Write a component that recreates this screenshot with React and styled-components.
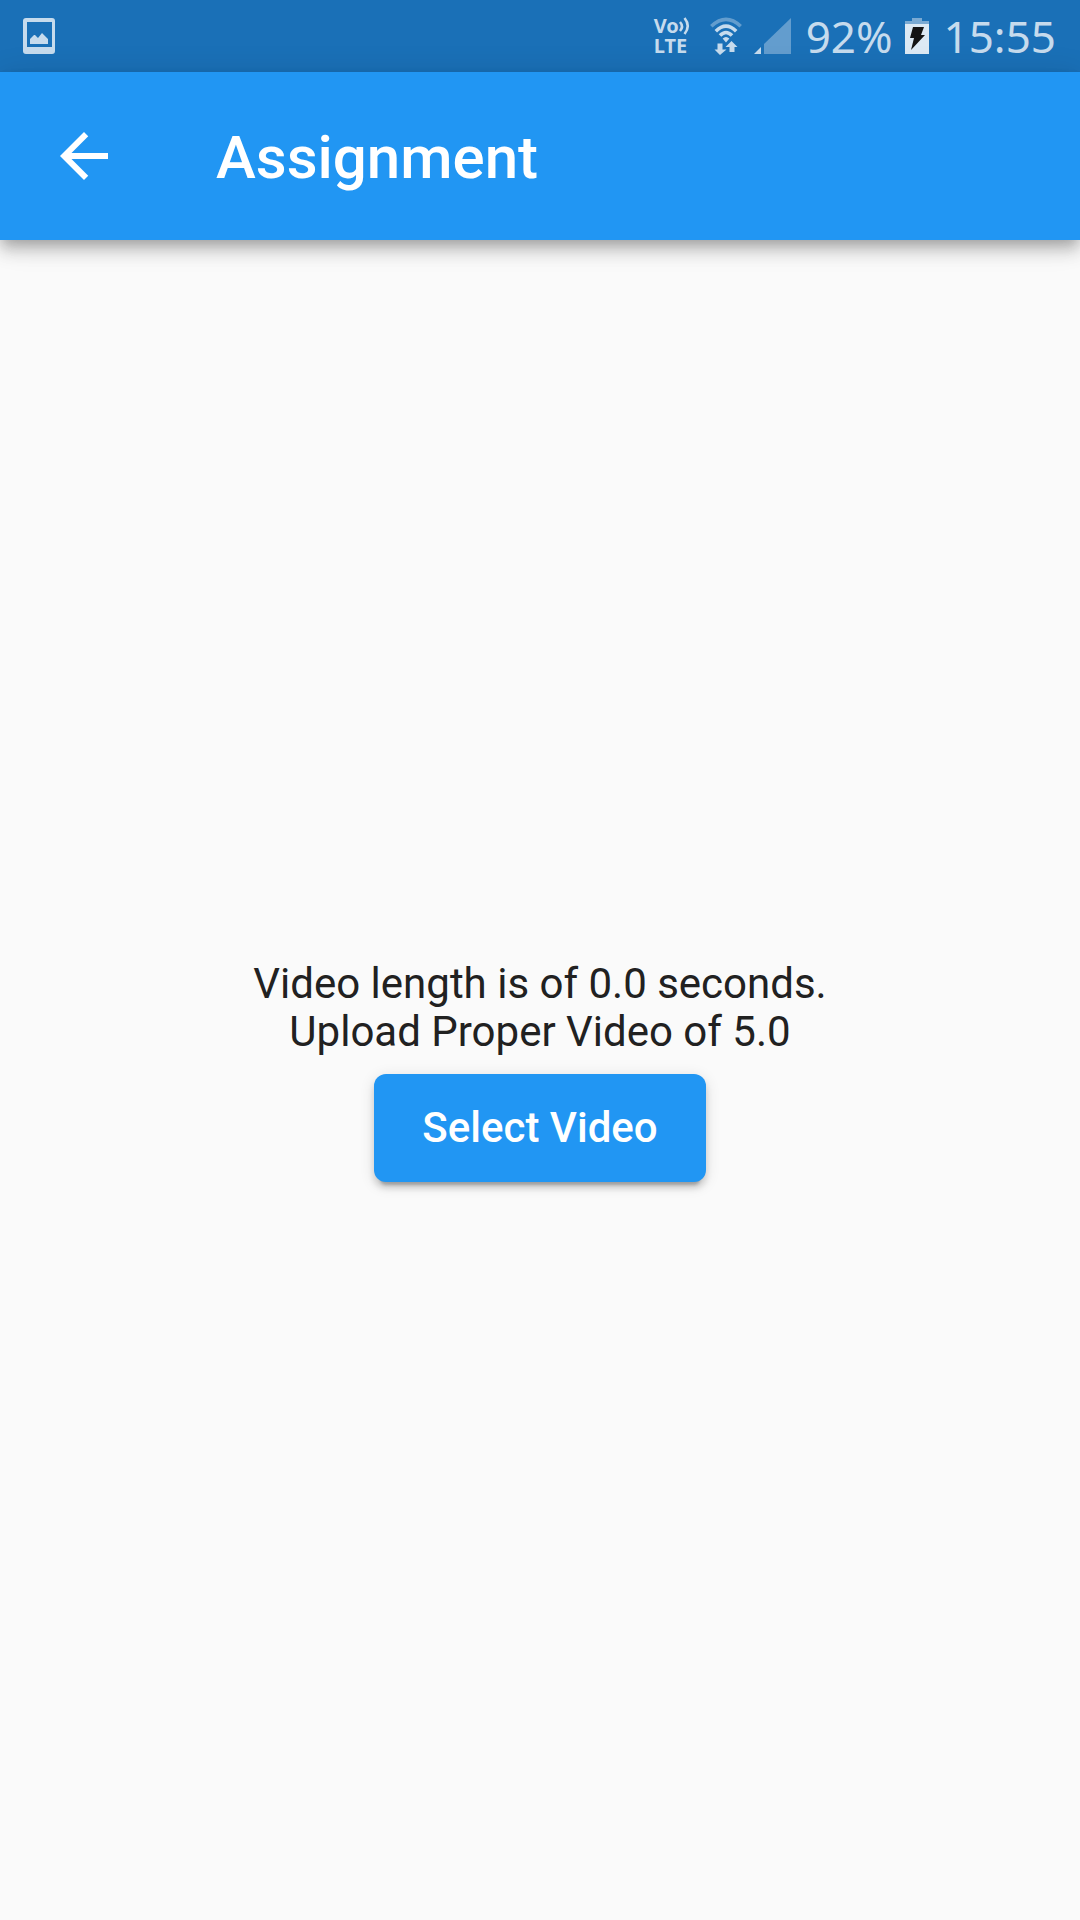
import React from "react";
import styled, { createGlobalStyle } from "styled-components";

const GlobalStyle = createGlobalStyle`
  *, *::before, *::after { box-sizing: border-box; }
  body {
    margin: 0;
    background: #fafafa;
    font-family: Roboto, "Liberation Sans", sans-serif;
  }
`;

const Screen = styled.div`
  display: flex;
  flex-direction: column;
  min-height: 100vh;
`;

const StatusBar = styled.div`
  display: flex;
  align-items: center;
  justify-content: space-between;
  height: 72px;
  padding: 0 24px 0 22px;
  background: #1a70b7;
  color: #c6dbed;
  font-family: "Noto Sans", sans-serif;
`;

const StatusGroup = styled.div`
  display: flex;
  align-items: center;
  gap: 12px;
`;

const Glyph = styled.svg`
  display: block;
  flex: none;
`;

const InlineGlyph = styled.svg`
  display: inline-block;
  vertical-align: -2px;
`;

const StatusText = styled.span`
  padding-left: 3px;
  font-size: 44px;
  line-height: 70px;
`;

const Volte = styled.div`
  width: 44px;
  font-size: 20px;
  font-weight: 700;
  line-height: 20px;
  white-space: nowrap;
`;

const AppBar = styled.header`
  display: flex;
  align-items: center;
  gap: 96px;
  height: 168px;
  padding: 0 48px;
  background: #2196f3;
  color: #fff;
  box-shadow: 0 6px 12px -3px rgba(0, 0, 0, 0.2),
    0 12px 15px rgba(0, 0, 0, 0.14), 0 3px 30px rgba(0, 0, 0, 0.12);
`;

const BackButton = styled.button`
  display: flex;
  padding: 0;
  border: 0;
  background: none;
  color: inherit;
  cursor: pointer;
`;

const Title = styled.h1`
  margin: 0;
  padding-top: 4px;
  font-size: 60px;
  font-weight: 500;
  line-height: 72px;
`;

const Content = styled.main`
  display: flex;
  flex: 1;
  flex-direction: column;
  align-items: center;
  justify-content: center;
`;

const Message = styled.p`
  margin: 0;
  color: #212121;
  font-size: 42px;
  line-height: 48px;
  text-align: center;
`;

const SelectButton = styled.button`
  height: 108px;
  margin: 18px 0;
  padding: 0 48px;
  border: 0;
  border-radius: 12px;
  background: #2196f3;
  color: #fff;
  font: 500 42px/48px Roboto, "Liberation Sans", sans-serif;
  box-shadow: 0 9px 3px -6px rgba(0, 0, 0, 0.2),
    0 6px 6px rgba(0, 0, 0, 0.14), 0 3px 15px rgba(0, 0, 0, 0.12);
  cursor: pointer;
`;

const PictureIcon = () => (
  <Glyph width="34" height="36" viewBox="0 0 34 36" aria-hidden="true">
    <path
      fill="currentColor"
      fillRule="evenodd"
      d="M4 0h26a3 3 0 0 1 3 3v30a3 3 0 0 1-3 3H4a3 3 0 0 1-3-3V3a3 3 0 0 1 3-3zM5 4v25h25V4z"
    />
    <path fill="currentColor" d="M8 26v-5l4-4h1l3 3 4-5 6 6v5z" />
  </Glyph>
);

const WavesIcon = () => (
  <InlineGlyph width="11" height="18" viewBox="0 0 11 18" aria-hidden="true">
    <g fill="none" stroke="currentColor" strokeWidth="2.6">
      <path d="M1 5q4 4.500 0 9" />
      <path d="M5.500 1q6.500 8 0 16" />
    </g>
  </InlineGlyph>
);

const WifiIcon = () => (
  <Glyph width="32" height="38" viewBox="0 0 32 38" aria-hidden="true">
    <g fill="none" stroke="currentColor" strokeWidth="3.6">
      <path d="M1.3 9.2Q16-4.6 30.7 9.2" opacity=".43" />
      <path d="M5.8 14.2Q16 4.2 26.2 14.2" />
      <path d="M10 18.6Q16 12.4 22 18.6" />
    </g>
    <path
      fill="currentColor"
      d="M12.6 21.6Q16 18.6 19.4 21.6L16 25.400zM7.500 26.500h5v6h4l-6.500 5.500-5.500-5.500h3zM19.500 35v-5h-4l6-6 6 6h-3v5z"
    />
  </Glyph>
);

const SignalIcon = () => (
  <Glyph width="37" height="36" viewBox="0 0 37 36" aria-hidden="true">
    <path fill="currentColor" d="M0 36l7-7v7z" />
    <path fill="currentColor" opacity=".43" d="M10 36V26L37 0v36z" />
  </Glyph>
);

const BatteryIcon = () => (
  <Glyph width="24" height="36" viewBox="0 0 24 36" aria-hidden="true">
    <path fill="#7aaad3" d="M0 6V3h7V0h10v3h7v3z" />
    <path fill="#dce9f4" d="M0 6h24v30H0z" />
    <path fill="#141414" d="M8 9h11l-3 8h4L6 32l3-12H5z" />
  </Glyph>
);

const BackIcon = () => (
  <Glyph width="72" height="72" viewBox="0 0 24 24" aria-hidden="true">
    <path
      fill="currentColor"
      d="M20 11H7.83l5.59-5.59L12 4l-8 8 8 8 1.41-1.41L7.83 13H20v-2z"
    />
  </Glyph>
);

export default function App() {
  return (
    <>
      <GlobalStyle />
      <Screen>
        <StatusBar>
          <PictureIcon />
          <StatusGroup>
            <Volte>
              Vo
              <WavesIcon />
              <br />
              LTE
            </Volte>
            <WifiIcon />
            <SignalIcon />
            <StatusText>92%</StatusText>
            <BatteryIcon />
            <StatusText>15:55</StatusText>
          </StatusGroup>
        </StatusBar>
        <AppBar>
          <BackButton type="button" aria-label="Back">
            <BackIcon />
          </BackButton>
          <Title>Assignment</Title>
        </AppBar>
        <Content>
          <Message>
            Video length is of 0.0 seconds.
            <br />
            Upload Proper Video of 5.0
          </Message>
          <SelectButton type="button">Select Video</SelectButton>
        </Content>
      </Screen>
    </>
  );
}
